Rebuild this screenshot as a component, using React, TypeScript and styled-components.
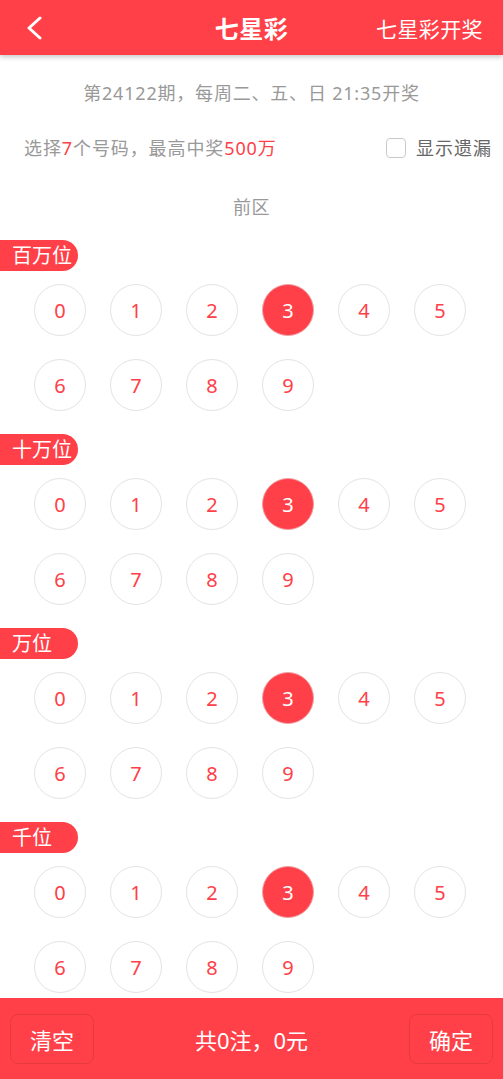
import React from 'react';
import { createGlobalStyle, default as styled } from 'styled-components';

const RED = '#ff4048';

const GlobalStyle = createGlobalStyle`
  html, body {
    margin: 0;
    padding: 0;
    height: 100%;
    overflow: hidden;
  }
  body {
    font-family: "Noto Sans", "Noto Sans CJK SC", sans-serif;
    background: #fff;
  }
  #root {
    height: 100%;
  }
`;

const Page = styled.div`
  display: flex;
  flex-direction: column;
  height: 100vh;
`;

const ScrollArea = styled.div`
  flex: 1;
  min-height: 0;
  overflow-y: auto;

  &::-webkit-scrollbar {
    width: 4px;
  }
  &::-webkit-scrollbar-track {
    background: #fff;
  }
  &::-webkit-scrollbar-thumb {
    background: #c1c1c1;
    border-radius: 2px;
  }
`;

const Header = styled.header`
  display: grid;
  grid-template-columns: 1fr auto 1fr;
  align-items: center;
  height: 55px;
  padding: 0 20px 0 26px;
  background: ${RED};
  color: #fff;
  box-shadow: 0 2px 5px rgba(0, 0, 0, 0.22);
  position: relative;
`;

const BackButton = styled.div`
  display: flex;
  align-items: center;
  height: 100%;
`;

const Title = styled.h1`
  margin: 0 0 0 -6px;
  font-size: 24px;
  font-weight: 700;
  letter-spacing: 0.5px;
`;

const HeaderLink = styled.div`
  justify-self: end;
  font-size: 21px;
  letter-spacing: 0.4px;
`;

const Info = styled.p`
  margin: 25px 0 0;
  line-height: 26px;
  font-size: 18px;
  letter-spacing: 0.8px;
  color: #999;
  text-align: center;
`;

const RuleRow = styled.div`
  display: flex;
  align-items: center;
  justify-content: space-between;
  margin-top: 29px;
  padding: 0 11px 0 24px;
  line-height: 26px;
  font-size: 18px;
`;

const RuleText = styled.span`
  color: #999;
  letter-spacing: 0.9px;
`;

const Hot = styled.span`
  color: ${RED};
`;

const Toggle = styled.label`
  display: flex;
  align-items: center;
  gap: 10px;
  color: #666;
  letter-spacing: 1px;
`;

const Box = styled.span`
  width: 18px;
  height: 18px;
  border: 1px solid #c8c8c8;
  border-radius: 4px;
`;

const Zone = styled.div`
  margin-top: 33px;
  line-height: 26px;
  font-size: 18px;
  letter-spacing: 0.5px;
  color: #999;
  text-align: center;
`;

const Section = styled.section`
  margin-top: 20px;

  & + & {
    margin-top: 23px;
  }
`;

const Tag = styled.div`
  width: 66px;
  height: 31px;
  padding-left: 12px;
  line-height: 31px;
  font-size: 20px;
  color: #fff;
  background: ${RED};
  border-radius: 0 16px 16px 0;
`;

const Balls = styled.div`
  display: grid;
  grid-template-columns: repeat(6, 76px);
  row-gap: 23px;
  margin-top: 13px;
  padding-left: 22px;
`;

const Ball = styled.div<{ $on?: boolean }>`
  justify-self: center;
  display: flex;
  align-items: center;
  justify-content: center;
  width: 50px;
  height: 50px;
  border-radius: 50%;
  border: 1px solid ${(p) => (p.$on ? '#f0a0a4' : '#e3e3e3')};
  background: ${(p) => (p.$on ? RED : '#fff')};
  color: ${(p) => (p.$on ? '#fff' : RED)};
  font-size: 20px;
`;

const BottomSpace = styled.div`
  height: 24px;
`;

const Footer = styled.footer`
  display: flex;
  align-items: center;
  justify-content: space-between;
  height: 81px;
  padding: 0 10px;
  background: ${RED};
  color: #fff;
  font-size: 22px;
`;

const FooterButton = styled.div`
  display: flex;
  align-items: center;
  justify-content: center;
  width: 82px;
  height: 48px;
  border: 1px solid rgba(0, 0, 0, 0.1);
  border-radius: 8px;
`;

const Summary = styled.div`
  text-align: center;
`;

const front = ['百万位', '十万位', '万位', '千位', '百位', '十位'];
const digits = Array.from({ length: 10 }, (_, i) => i);
const back = Array.from({ length: 15 }, (_, i) => i);

export default function App() {
  return (
    <Page>
      <GlobalStyle />
      <ScrollArea>
        <Header>
          <BackButton>
            <svg width="16" height="24" viewBox="0 0 16 24">
              <polyline
                points="14,2 3,12 14,22"
                fill="none"
                stroke="#fff"
                strokeWidth="3"
                strokeLinecap="round"
                strokeLinejoin="round"
              />
            </svg>
          </BackButton>
          <Title>七星彩</Title>
          <HeaderLink>七星彩开奖</HeaderLink>
        </Header>

        <Info>第24122期，每周二、五、日 21:35开奖</Info>

        <RuleRow>
          <RuleText>
            选择<Hot>7</Hot>个号码，最高中奖<Hot>500万</Hot>
          </RuleText>
          <Toggle>
            <Box />
            显示遗漏
          </Toggle>
        </RuleRow>

        <Zone>前区</Zone>

        {front.map((name) => (
          <Section key={name}>
            <Tag>{name}</Tag>
            <Balls>
              {digits.map((n) => (
                <Ball key={n} $on={n === 3}>
                  {n}
                </Ball>
              ))}
            </Balls>
          </Section>
        ))}

        <Zone>后区</Zone>

        <Section>
          <Tag>个位</Tag>
          <Balls>
            {back.map((n) => (
              <Ball key={n} $on={n === 3}>
                {n}
              </Ball>
            ))}
          </Balls>
        </Section>

        <BottomSpace />
      </ScrollArea>

      <Footer>
        <FooterButton>清空</FooterButton>
        <Summary>共0注，0元</Summary>
        <FooterButton>确定</FooterButton>
      </Footer>
    </Page>
  );
}
